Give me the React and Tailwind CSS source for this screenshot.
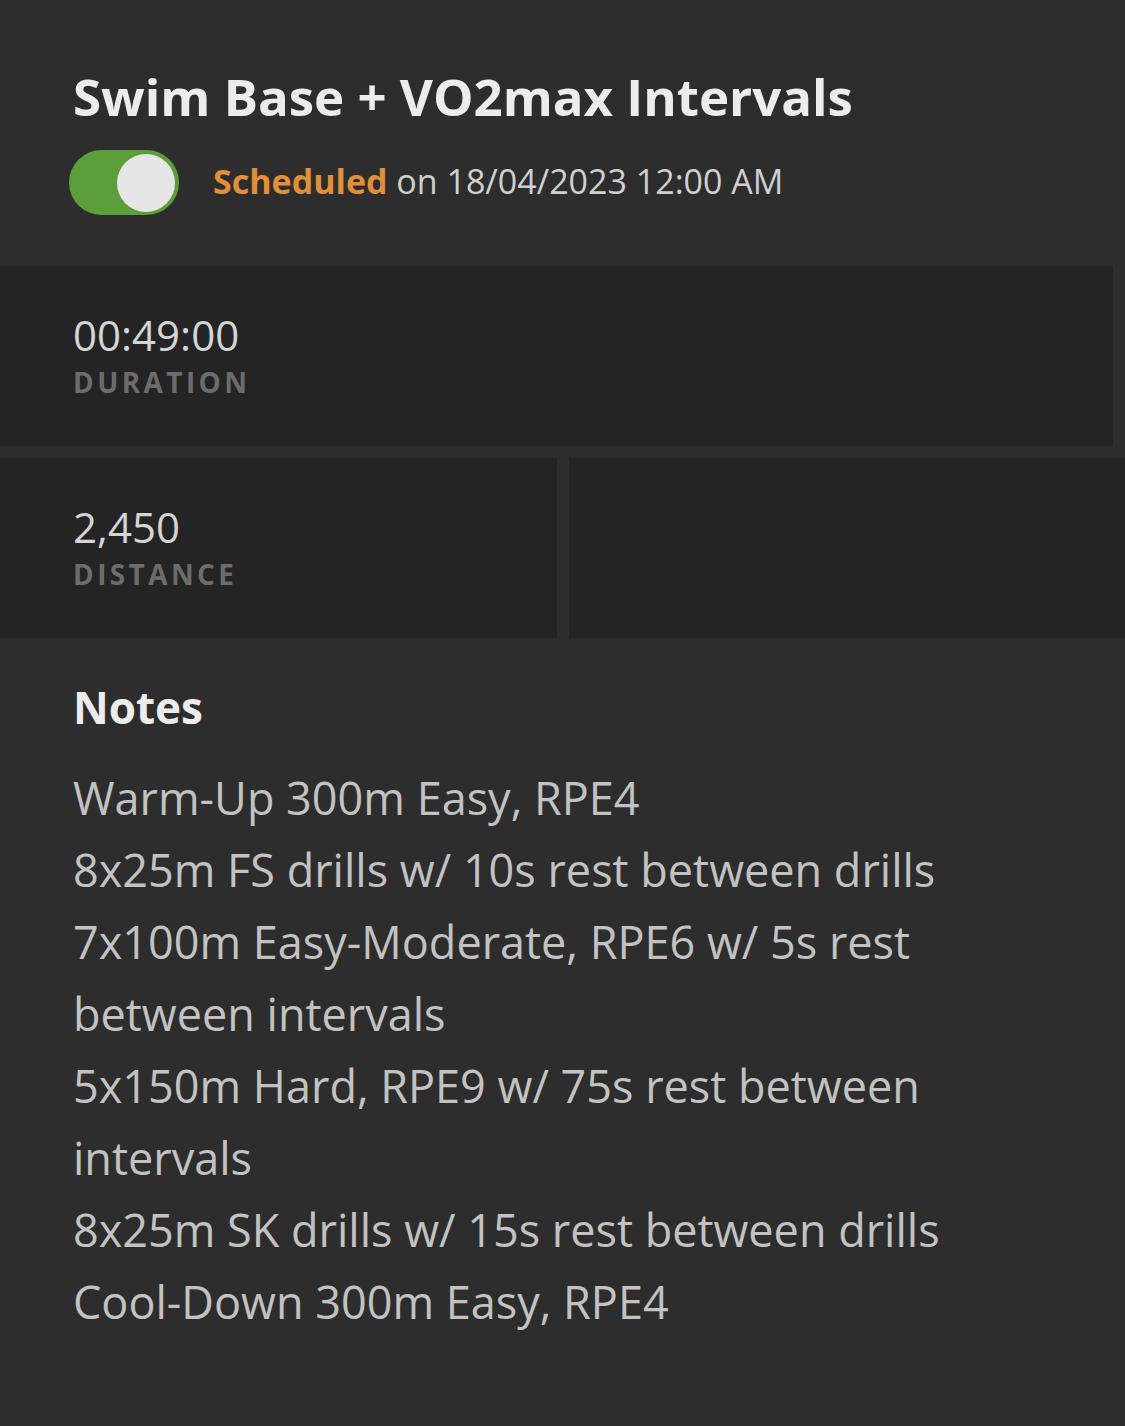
import React from "react";

const notes = [
  "Warm-Up 300m Easy, RPE4",
  "8x25m FS drills w/ 10s rest between drills",
  "7x100m Easy-Moderate, RPE6 w/ 5s rest between intervals",
  "5x150m Hard, RPE9 w/ 75s rest between intervals",
  "8x25m SK drills w/ 15s rest between drills",
  "Cool-Down 300m Easy, RPE4",
];

const Stat = ({ value, label }) => (
  <div className="bg-[#242424] h-[180px] flex flex-col justify-center pl-[73px]">
    <p className="text-[42px] leading-[44px] text-[#d4d4d4]">{value}</p>
    <p className="mt-[8px] text-[28px] leading-[34px] font-bold tracking-[3.4px] text-[#6c6c6c]">{label}</p>
  </div>
);

const App = () => {
  return (
    <div className="w-[1125px] h-[1426px] bg-[#2d2d2d] font-['Open_Sans',sans-serif] overflow-hidden">
      <div className="pt-[66px] px-[73px] pb-[51px]">
        <h1 className="text-[51px] leading-[60px] font-bold text-[#ececec]">
          Swim Base + VO2max Intervals
        </h1>
        <div className="flex items-center mt-[24px]">
          <div className="w-[110px] h-[65px] -ml-[4px] rounded-full bg-[#5c9e3a] flex items-center justify-end pr-[4px]">
            <div className="w-[58px] h-[58px] rounded-full bg-[#e6e6e6]" />
          </div>
          <p className="ml-[34px] text-[34px] -mt-[2px]">
            <span className="font-bold text-[#e0903a]">Scheduled</span>
            <span className="text-[#cfcfcf]"> on 18/04/2023 12:00 AM</span>
          </p>
        </div>
      </div>

      <div className="flex flex-col gap-[12px]">
        <div className="pr-[12px]">
          <Stat value="00:49:00" label="DURATION" />
        </div>
        <div className="grid grid-cols-[557px_1fr] gap-[12px]">
          <Stat value="2,450" label="DISTANCE" />
          <div className="bg-[#242424] h-[180px]" />
        </div>
      </div>

      <div className="px-[73px] pt-[44px]">
        <h2 className="text-[44px] leading-[50px] font-bold text-[#ececec]">Notes</h2>
        <div className="mt-[30px] text-[45px] leading-[72px] text-[#c2c2c2]">
          {notes.map((n) => (
            <p key={n}>{n}</p>
          ))}
        </div>
      </div>
    </div>
  );
};

export default App;
